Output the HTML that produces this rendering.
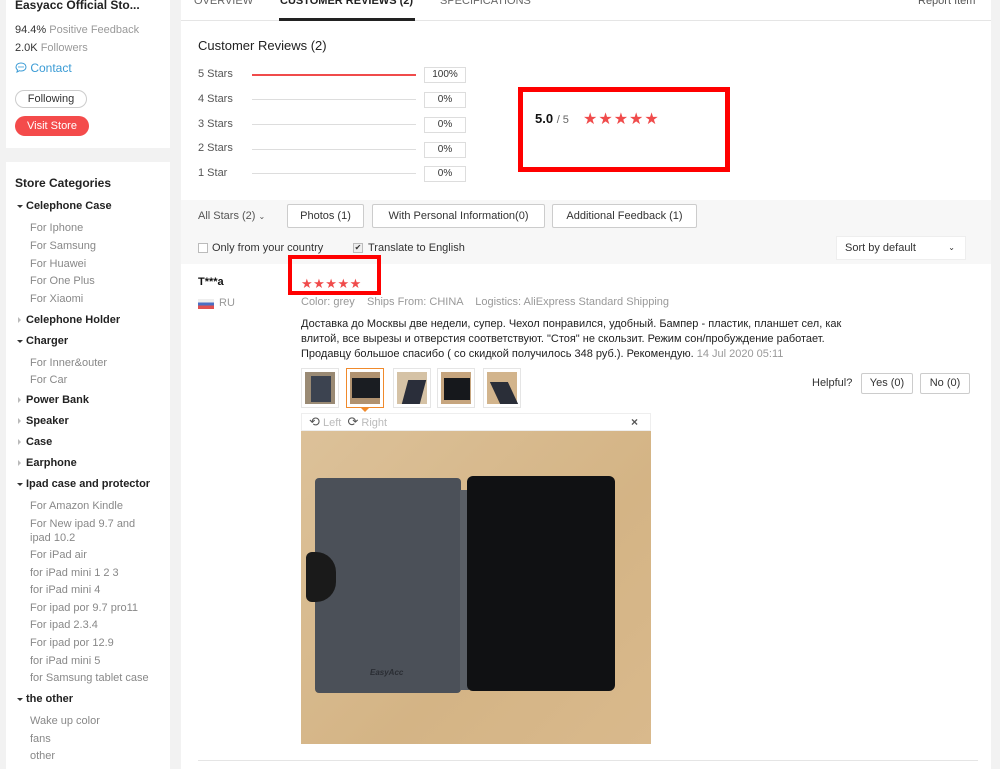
<!DOCTYPE html>
<html><head><meta charset="utf-8"><style>
*{margin:0;padding:0;box-sizing:border-box}
body{width:1000px;height:769px;background:#f2f2f2;font-family:"Liberation Sans","DejaVu Sans",sans-serif;position:relative;overflow:hidden;color:#333;font-size:11px}
.a{position:absolute;white-space:nowrap}
.card{position:absolute;background:#fff}
.g{color:#999}
.cat{position:absolute;left:26px;font-weight:bold;color:#222;font-size:11px}
.cat:before{content:"";position:absolute;left:-9px;top:5px;border-left:3px solid transparent;border-right:3px solid transparent;border-top:3px solid #333}
.cat.c:before{border-top:3px solid transparent;border-bottom:3px solid transparent;border-left:3px solid #bbb;border-right:0;top:3px;left:-8px}
.sub{position:absolute;left:30px;color:#888;font-size:11px}
.bar{position:absolute;left:252px;width:164px;height:1px;background:#ddd}
.pct{position:absolute;left:424px;width:42px;height:16px;border:1px solid #ddd;text-align:center;font-size:10px;line-height:14px;color:#333}
.btn{position:absolute;height:24px;border:1px solid #ccc;background:#fff;border-radius:2px;text-align:center;line-height:22px;font-size:11px;color:#333}
.star{color:#f04b4b}
.th{position:absolute;top:368px;width:38px;height:40px;border:1px solid #e5e5e5;background:#fff}
.th i{position:absolute;left:3px;top:3px;right:3px;bottom:3px;background:#c9a880}
</style></head><body>
<div class="card" style="left:6px;top:0;width:164px;height:148px"></div>
<div class="a" style="left:15px;top:-2px;font-size:12px;font-weight:bold;color:#222">Easyacc Official Sto...</div>
<div class="a" style="left:15px;top:24px">94.4% <span class="g">Positive Feedback</span></div>
<div class="a" style="left:15px;top:42px">2.0K <span class="g">Followers</span></div>
<div class="a" style="left:15px;top:61px;color:#3a9bd5;font-size:12px">
<svg width="12" height="11" viewBox="0 0 12 11" style="vertical-align:-1px"><path d="M6 1C3 1 1 2.8 1 5c0 1.2.6 2.2 1.5 2.9L2 10l2.5-1.3c.5.2 1 .3 1.5.3 3 0 5-1.8 5-4S9 1 6 1z" fill="none" stroke="#3a9bd5"/><circle cx="4" cy="5" r=".7" fill="#3a9bd5"/><circle cx="6" cy="5" r=".7" fill="#3a9bd5"/><circle cx="8" cy="5" r=".7" fill="#3a9bd5"/></svg> Contact</div>
<div class="a" style="left:15px;top:90px;width:72px;height:18px;border:1px solid #ccc;border-radius:9px;text-align:center;line-height:16px;color:#333">Following</div>
<div class="a" style="left:15px;top:116px;width:74px;height:20px;background:#f44b4b;border-radius:10px;text-align:center;line-height:20px;color:#fff">Visit Store</div>

<div class="card" style="left:6px;top:162px;width:164px;height:607px"></div>
<div class="a" style="left:15px;top:176px;font-size:12px;font-weight:bold;color:#222">Store Categories</div>
<div class="cat" style="top:200px">Celephone Case</div>
<div class="sub" style="top:222px">For Iphone</div>
<div class="sub" style="top:240px">For Samsung</div>
<div class="sub" style="top:258px">For Huawei</div>
<div class="sub" style="top:275px">For One Plus</div>
<div class="sub" style="top:293px">For Xiaomi</div>
<div class="cat c" style="top:314px">Celephone Holder</div>
<div class="cat" style="top:335px">Charger</div>
<div class="sub" style="top:357px">For Inner&amp;outer</div>
<div class="sub" style="top:374px">For Car</div>
<div class="cat c" style="top:394px">Power Bank</div>
<div class="cat c" style="top:415px">Speaker</div>
<div class="cat c" style="top:436px">Case</div>
<div class="cat c" style="top:457px">Earphone</div>
<div class="cat" style="top:478px">Ipad case and protector</div>
<div class="sub" style="top:500px">For Amazon Kindle</div>
<div class="sub" style="top:517px;line-height:14px">For New ipad 9.7 and<br>ipad 10.2</div>
<div class="sub" style="top:549px">For iPad air</div>
<div class="sub" style="top:567px">for iPad mini 1 2 3</div>
<div class="sub" style="top:584px">for iPad mini 4</div>
<div class="sub" style="top:602px">For ipad por 9.7 pro11</div>
<div class="sub" style="top:619px">For ipad 2.3.4</div>
<div class="sub" style="top:637px">For ipad por 12.9</div>
<div class="sub" style="top:655px">for iPad mini 5</div>
<div class="sub" style="top:672px">for Samsung tablet case</div>
<div class="cat" style="top:693px">the other</div>
<div class="sub" style="top:715px">Wake up color</div>
<div class="sub" style="top:733px">fans</div>
<div class="sub" style="top:750px">other</div>

<div class="card" style="left:181px;top:0;width:810px;height:769px"></div>
<div class="a" style="left:181px;top:20px;width:810px;height:1px;background:#e5e5e5"></div>
<div class="a" style="left:194px;top:-5px;color:#666;font-size:11px">OVERVIEW</div>
<div class="a" style="left:280px;top:-5px;color:#222;font-weight:bold;font-size:11px">CUSTOMER REVIEWS (2)</div>
<div class="a" style="left:279px;top:18px;width:136px;height:3px;background:#222"></div>
<div class="a" style="left:440px;top:-5px;color:#666;font-size:11px">SPECIFICATIONS</div>
<div class="a" style="left:918px;top:-5px;color:#555;font-size:11px">Report Item</div>

<div class="a" style="left:198px;top:38px;font-size:13px;color:#222">Customer Reviews (2)</div>
<div class="a" style="left:198px;top:68px;color:#555">5 Stars</div>
<div class="a" style="left:198px;top:93px;color:#555">4 Stars</div>
<div class="a" style="left:198px;top:118px;color:#555">3 Stars</div>
<div class="a" style="left:198px;top:142px;color:#555">2 Stars</div>
<div class="a" style="left:198px;top:167px;color:#555">1 Star</div>
<div class="bar" style="top:74px;height:2px;background:#f04b4b"></div>
<div class="bar" style="top:99px"></div>
<div class="bar" style="top:124px"></div>
<div class="bar" style="top:149px"></div>
<div class="bar" style="top:173px"></div>
<div class="pct" style="top:67px">100%</div>
<div class="pct" style="top:92px">0%</div>
<div class="pct" style="top:117px">0%</div>
<div class="pct" style="top:142px">0%</div>
<div class="pct" style="top:166px">0%</div>

<div class="a" style="left:518px;top:87px;width:212px;height:85px;border:5px solid #f00"></div>
<div class="a" style="left:535px;top:111px;font-size:13px;font-weight:bold;color:#111">5.0 <span style="font-weight:normal;color:#666;font-size:11px">/ 5</span></div>
<div class="a star" style="left:583px;top:109px;font-size:16px;letter-spacing:1px">★★★★★</div>

<div class="a" style="left:181px;top:200px;width:810px;height:64px;background:#f7f7f7"></div>
<div class="a" style="left:198px;top:210px;color:#555">All Stars (2) <span style="font-size:8px">⌄</span></div>
<div class="btn" style="left:287px;top:204px;width:77px">Photos (1)</div>
<div class="btn" style="left:372px;top:204px;width:173px">With Personal Information(0)</div>
<div class="btn" style="left:552px;top:204px;width:145px">Additional Feedback (1)</div>
<div class="a" style="left:198px;top:243px;width:10px;height:10px;border:1px solid #bbb;background:#fff"></div>
<div class="a" style="left:212px;top:242px;color:#333">Only from your country</div>
<div class="a" style="left:353px;top:243px;width:10px;height:10px;border:1px solid #bbb;background:#eee;font-size:8px;line-height:8px;text-align:center">✔</div>
<div class="a" style="left:368px;top:242px;color:#333">Translate to English</div>
<div class="a" style="left:836px;top:236px;width:130px;height:24px;background:#fff;border:1px solid #eee;padding-left:8px;line-height:22px;color:#333">Sort by default<span style="position:absolute;right:10px;font-size:8px">⌄</span></div>

<div class="a" style="left:198px;top:276px;font-weight:bold;color:#111">T***a</div>
<div class="a" style="left:198px;top:299px;width:16px;height:10px;background:linear-gradient(#eee 33%,#4b6fc4 33%,#4b6fc4 66%,#e05050 66%)"></div>
<div class="a g" style="left:219px;top:297px">RU</div>
<div class="a" style="left:288px;top:255px;width:93px;height:40px;border:4px solid #f00"></div>
<div class="a star" style="left:301px;top:276px;font-size:13px;letter-spacing:0.5px">★★★★★</div>
<div class="a g" style="left:301px;top:296px">Color: grey &nbsp;&nbsp; Ships From: CHINA &nbsp;&nbsp; Logistics: AliExpress Standard Shipping</div>
<div class="a" style="left:301px;top:317px;line-height:15px;color:#222">Доставка до Москвы две недели, супер. Чехол понравился, удобный. Бампер - пластик, планшет сел, как<br>влитой, все вырезы и отверстия соответствуют. "Стоя" не скользит. Режим сон/пробуждение работает.<br>Продавцу большое спасибо ( со скидкой получилось 348 руб.). Рекомендую. <span class="g">14 Jul 2020 05:11</span></div>

<div class="th" style="left:301px"><i style="background:#9a8a74"><b style="position:absolute;left:6px;top:4px;width:20px;height:26px;background:#3c4350"></b></i></div>
<div class="th" style="left:346px;border-color:#f08a2c"><i style="background:#b09270"><b style="position:absolute;left:2px;top:6px;width:28px;height:20px;background:#1a1d22"></b></i></div>
<div class="a" style="left:360px;top:407px;border-left:5px solid transparent;border-right:5px solid transparent;border-top:5px solid #f08a2c"></div>
<div class="th" style="left:393px"><i style="background:#d5c2a5"><b style="position:absolute;left:8px;top:8px;width:18px;height:24px;background:#2a2e3a;transform:skewX(-15deg)"></b></i></div>
<div class="th" style="left:437px"><i style="background:#c6a57e"><b style="position:absolute;left:3px;top:6px;width:26px;height:22px;background:#16181c"></b></i></div>
<div class="th" style="left:483px"><i style="background:#d2b48c"><b style="position:absolute;left:8px;top:10px;width:18px;height:22px;background:#2a2e38;transform:skewX(25deg)"></b></i></div>

<div class="a" style="left:812px;top:377px;color:#333">Helpful?</div>
<div class="btn" style="left:861px;top:373px;width:52px;height:21px;line-height:19px">Yes (0)</div>
<div class="btn" style="left:920px;top:373px;width:50px;height:21px;line-height:19px">No (0)</div>

<div class="a" style="left:301px;top:413px;width:350px;height:18px;border:1px solid #eee;background:#fff"></div>
<div class="a" style="left:309px;top:414px;color:#bbb;font-size:11px"><span style="color:#555;font-size:13px">⟲</span> Left &nbsp;<span style="color:#555;font-size:13px">⟳</span> Right</div>
<div class="a" style="left:631px;top:415px;color:#555;font-size:12px;font-weight:bold">×</div>
<div class="a" style="left:301px;top:431px;width:350px;height:313px;background:linear-gradient(135deg,#dcc199,#d4b485 60%,#d9b98c)"></div>
<div class="a" style="left:315px;top:478px;width:146px;height:215px;background:#4b5058;border-radius:4px"></div>
<div class="a" style="left:460px;top:490px;width:9px;height:200px;background:#5a5f66"></div>
<div class="a" style="left:306px;top:552px;width:30px;height:50px;background:#1a1a1a;border-radius:6px 20px 20px 6px"></div>
<div class="a" style="left:370px;top:668px;color:#2a2d33;font-size:8px;font-weight:bold;font-style:italic">EasyAcc</div>
<div class="a" style="left:467px;top:476px;width:148px;height:215px;background:#101113;border-radius:6px"></div>
<div class="a" style="left:198px;top:760px;width:780px;height:1px;background:#e5e5e5"></div>
</body></html>
